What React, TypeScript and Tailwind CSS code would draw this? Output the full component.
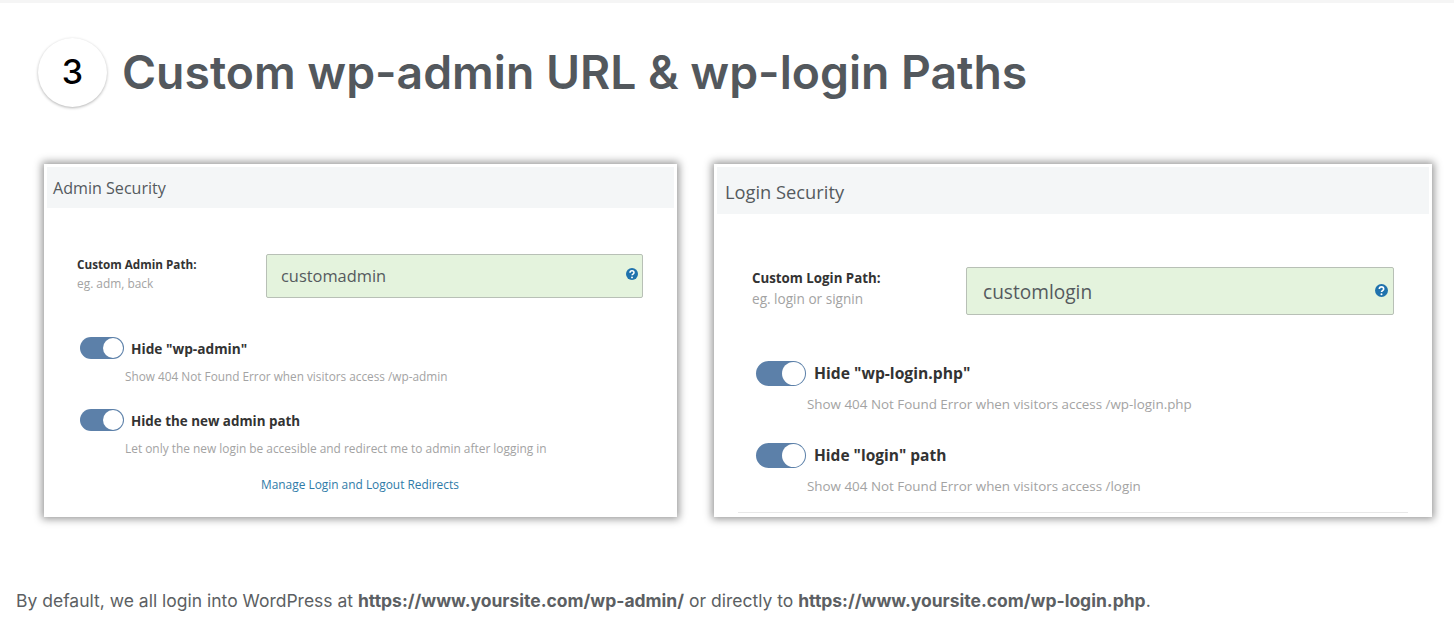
import React from "react";

function Help({ size }: { size: number }) {
  return (
    <svg width={size} height={size} viewBox="0 0 24 24" className="shrink-0">
      <circle cx="12" cy="12" r="12" fill="#1f72ad" />
      <path d="M8 9.3a4 4 0 0 1 8 0c0 2.8-4 2.9-4 5.4" fill="none" stroke="#fff" strokeWidth="3" />
      <circle cx="12" cy="18.8" r="1.9" fill="#fff" />
    </svg>
  );
}

function Toggle({ big }: { big?: boolean }) {
  return big ? (
    <div className="w-[50px] h-[25px] rounded-full bg-[#5c80a9] flex items-center justify-end pr-[1px] shrink-0">
      <div className="w-[23px] h-[23px] rounded-full bg-white" />
    </div>
  ) : (
    <div className="w-[44px] h-[22px] rounded-full bg-[#5c80a9] flex items-center justify-end pr-[1px] shrink-0">
      <div className="w-[20px] h-[20px] rounded-full bg-white" />
    </div>
  );
}

export default function App() {
  return (
    <div className="w-[1454px] h-[635px] overflow-hidden bg-white font-['Inter',sans-serif]">
      <div className="h-[3px] bg-[#f5f5f5]" />
      <div className="flex items-center pl-[38px] pt-[35px] gap-[15px]">
        <div className="w-[69px] h-[69px] rounded-full bg-white shadow-[0_1px_3px_rgba(0,0,0,0.3)] flex items-center justify-center pb-[3px] text-[34px] text-black font-medium">
          3
        </div>
        <h1 className="text-[46.3px] leading-[69px] font-semibold text-[#53585d] whitespace-nowrap">
          Custom wp-admin URL &amp; wp-login Paths
        </h1>
      </div>

      <div className="flex items-start pl-[44px] pt-[57px] gap-[37px] font-['Open_Sans',sans-serif]">
        <div className="w-[633px] h-[353px] bg-white p-[3px] shadow-[0_0_8px_2px_rgba(0,0,0,0.42)] flex flex-col">
          <div className="h-[41px] bg-[#f4f6f7] pl-[6px] pt-[2px] flex items-center text-[16.1px] text-[#555a5e]">Admin Security</div>
          <div className="flex pl-[30px] pt-[46px]">
            <div className="w-[189px] pt-[2px]">
              <div className="text-[11.7px] leading-[17px] font-bold text-[#333]">Custom Admin Path:</div>
              <div className="text-[11.9px] leading-[20px] text-[#a3a3a3]">eg. adm, back</div>
            </div>
            <div className="w-[377px] h-[44px] rounded-[2px] bg-[#e4f3dd] border border-[#b8c0b6] pl-[14px] pr-[4px] flex items-center justify-between text-[16.4px] text-[#555a5e]">
              <span className="pt-[1px]">customadmin</span>
              <span className="pb-[4px]"><Help size={12} /></span>
            </div>
          </div>
          <div className="pl-[33px] pt-[38px]">
            <div className="flex items-center gap-[7px] h-[24px]">
              <Toggle />
              <span className="pt-[2px] text-[13.7px] font-bold text-[#333]">Hide "wp-admin"</span>
            </div>
            <div className="pl-[45px] pt-[6px] text-[11.8px] leading-[20px] text-[#a3a3a3]">Show 404 Not Found Error when visitors access /wp-admin</div>
          </div>
          <div className="pl-[33px] pt-[22px]">
            <div className="flex items-center gap-[7px] h-[24px]">
              <Toggle />
              <span className="pt-[2px] text-[13.4px] font-bold text-[#333]">Hide the new admin path</span>
            </div>
            <div className="pl-[45px] pt-[6px] text-[11.9px] leading-[20px] text-[#a3a3a3]">Let only the new login be accesible and redirect me to admin after logging in</div>
          </div>
          <div className="pl-[214px] pt-[16px] text-[11.9px] leading-[20px] text-[#2f7ba8]">Manage Login and Logout Redirects</div>
        </div>

        <div className="w-[718px] h-[353px] bg-white p-[3px] shadow-[0_0_8px_2px_rgba(0,0,0,0.42)] flex flex-col">
          <div className="h-[47px] bg-[#f4f6f7] pl-[8px] pt-[2px] flex items-center text-[18.3px] text-[#555a5e]">Login Security</div>
          <div className="flex pl-[35px] pt-[53px]">
            <div className="w-[214px] pt-[2px]">
              <div className="text-[13.3px] leading-[18px] font-bold text-[#333]">Custom Login Path:</div>
              <div className="text-[13.6px] leading-[24px] text-[#a3a3a3]">eg. login or signin</div>
            </div>
            <div className="w-[428px] h-[48px] rounded-[2px] bg-[#e4f3dd] border border-[#b8c0b6] pl-[16px] pr-[5px] flex items-center justify-between text-[19.1px] text-[#555a5e]">
              <span className="pt-[2px]">customlogin</span>
              <span className="pb-[2px]"><Help size={13} /></span>
            </div>
          </div>
          <div className="pl-[39px] pt-[45px]">
            <div className="flex items-center gap-[8px] h-[26px]">
              <Toggle big />
              <span className="pt-[1px] text-[15.7px] font-bold text-[#333]">Hide "wp-login.php"</span>
            </div>
            <div className="pl-[51px] pt-[8px] text-[13.4px] leading-[20px] text-[#a3a3a3]">Show 404 Not Found Error when visitors access /wp-login.php</div>
          </div>
          <div className="pl-[39px] pt-[28px]">
            <div className="flex items-center gap-[8px] h-[26px]">
              <Toggle big />
              <span className="pt-[1px] text-[15.5px] font-bold text-[#333]">Hide "login" path</span>
            </div>
            <div className="pl-[51px] pt-[8px] text-[13.4px] leading-[20px] text-[#a3a3a3]">Show 404 Not Found Error when visitors access /login</div>
          </div>
          <div className="ml-[21px] mr-[21px] mt-[16px] h-px bg-[#e8e8e8]" />
        </div>
      </div>

      <p className="pl-[16px] pt-[72px] text-[17.5px] leading-[24px] text-[#5c5f63] whitespace-nowrap">
        By default, we all login into WordPress at <b>https://www.yoursite.com/wp-admin/</b> or directly to <b>https://www.yoursite.com/wp-login.php</b>.
      </p>
    </div>
  );
}
